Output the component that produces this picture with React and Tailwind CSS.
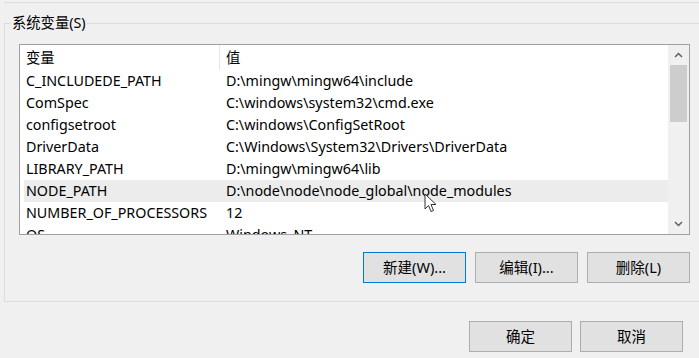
import React from "react";

const rows = [
  ["C_INCLUDEDE_PATH", "D:\\mingw\\mingw64\\include"],
  ["ComSpec", "C:\\windows\\system32\\cmd.exe"],
  ["configsetroot", "C:\\windows\\ConfigSetRoot"],
  ["DriverData", "C:\\Windows\\System32\\Drivers\\DriverData"],
  ["LIBRARY_PATH", "D:\\mingw\\mingw64\\lib"],
  ["NODE_PATH", "D:\\node\\node\\node_global\\node_modules"],
  ["NUMBER_OF_PROCESSORS", "12"],
  ["OS", "Windows_NT"],
];

function Button({ label, focused }) {
  return (
    <button
      className={
        focused
          ? "w-[103px] h-[31px] bg-[#e1e1e1] border border-[#0078d7] text-[14.5px] text-black"
          : "w-[103px] h-[31px] bg-[#e1e1e1] border border-[#adadad] text-[14.5px] text-black"
      }
    >
      {label}
    </button>
  );
}

export default function App() {
  return (
    <div
      className="w-[699px] h-[358px] bg-[#f0f0f0] overflow-hidden relative text-black"
      style={{ fontFamily: '"Noto Sans", "Noto Sans CJK SC", sans-serif' }}
    >
      {/* bottom edge of the group above */}
      <div className="h-[3px] ml-[4px] border-b border-[#dcdcdc]"></div>

      {/* 系统变量 group */}
      <div className="relative mt-[20px] ml-[4px] w-[720px] h-[279px] border border-[#dcdcdc] pt-[20px] pl-[14px]">
        <span className="absolute left-[6px] top-[-11px] px-[1px] bg-[#f0f0f0] text-[14.3px] leading-[20px]">
          系统变量(S)
        </span>

        <div className="w-[671px] h-[191px] border border-[#a0a0a0] bg-white flex overflow-hidden">
          <div className="w-[648px] h-full overflow-hidden">
            <div className="h-[25px] flex text-[14.3px] leading-[25px]">
              <div className="w-[200px] pl-[6px] border-r border-[#e5e5e5]">变量</div>
              <div className="pl-[6px]">值</div>
            </div>
            {rows.map(([name, value]) => (
              <div
                key={name}
                className={
                  name === "NODE_PATH"
                    ? "h-[22px] ml-[4px] flex text-[14.3px] leading-[22px] bg-[#ececec]"
                    : "h-[22px] ml-[4px] flex text-[14.3px] leading-[22px]"
                }
              >
                <div className="w-[196px] pl-[2px] whitespace-nowrap">{name}</div>
                <div className="pl-[6px] whitespace-nowrap">{value}</div>
              </div>
            ))}
          </div>

          {/* scrollbar */}
          <div className="w-[21px] h-full bg-[#f0f0f0] flex flex-col items-center">
            <div className="h-[20px] w-full flex items-center justify-center">
              <svg width="9" height="6" viewBox="0 0 9 6">
                <path d="M1 5 L4.5 1.5 L8 5" fill="none" stroke="#606060" strokeWidth="1.5" />
              </svg>
            </div>
            <div className="w-[17px] h-[57px] bg-[#cdcdcd]"></div>
            <div className="flex-1"></div>
            <div className="h-[20px] w-full flex items-center justify-center">
              <svg width="9" height="6" viewBox="0 0 9 6">
                <path d="M1 1 L4.5 4.5 L8 1" fill="none" stroke="#606060" strokeWidth="1.5" />
              </svg>
            </div>
          </div>
        </div>

        <div className="w-[671px] mt-[17px] flex justify-end gap-[9px]">
          <Button label="新建(W)..." focused />
          <Button label="编辑(I)..." />
          <Button label="删除(L)" />
        </div>
      </div>

      <div className="w-[683px] mt-[19px] flex justify-end gap-[8px]">
        <Button label="确定" />
        <Button label="取消" />
      </div>

      {/* mouse pointer */}
      <svg className="absolute left-[424px] top-[193px]" width="13" height="20" viewBox="0 0 13 20">
        <path
          d="M1 1 L1 16 L4.5 12.5 L7 18.5 L9.5 17.5 L7 11.5 L12 11.5 Z"
          fill="white"
          stroke="#333"
          strokeWidth="1"
          strokeLinejoin="round"
        />
      </svg>
    </div>
  );
}
